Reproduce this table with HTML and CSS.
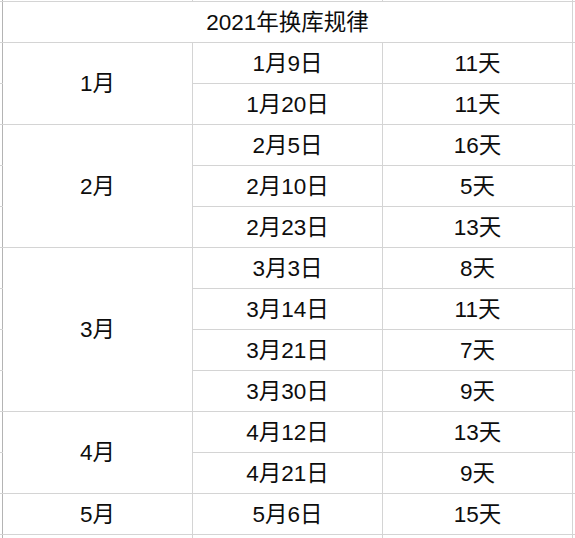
FILE: index.html
```html
<!DOCTYPE html>
<html lang="zh-CN">
<head>
<meta charset="utf-8">
<title>2021年换库规律</title>
<link rel="stylesheet" href="styles.css">
</head>
<body>
<div class="sheet">
  <div class="stub edge-l"></div><div class="stub"></div><div class="stub"></div><div class="stub"></div><div class="stub"></div>

  <div class="stub edge-l"></div>
  <div class="cell title">2021年换库规律</div>
  <div class="stub"></div>

  <div class="stub edge-l"></div><div class="cell month span2">1月</div><div class="cell">1月9日</div><div class="cell">11天</div><div class="stub"></div>
  <div class="stub edge-l"></div><div class="cell">1月20日</div><div class="cell">11天</div><div class="stub"></div>

  <div class="stub edge-l"></div><div class="cell month span3">2月</div><div class="cell">2月5日</div><div class="cell">16天</div><div class="stub"></div>
  <div class="stub edge-l"></div><div class="cell">2月10日</div><div class="cell">5天</div><div class="stub"></div>
  <div class="stub edge-l"></div><div class="cell">2月23日</div><div class="cell">13天</div><div class="stub"></div>

  <div class="stub edge-l"></div><div class="cell month span4">3月</div><div class="cell">3月3日</div><div class="cell">8天</div><div class="stub"></div>
  <div class="stub edge-l"></div><div class="cell">3月14日</div><div class="cell">11天</div><div class="stub"></div>
  <div class="stub edge-l"></div><div class="cell">3月21日</div><div class="cell">7天</div><div class="stub"></div>
  <div class="stub edge-l"></div><div class="cell">3月30日</div><div class="cell">9天</div><div class="stub"></div>

  <div class="stub edge-l"></div><div class="cell month span2">4月</div><div class="cell">4月12日</div><div class="cell">13天</div><div class="stub"></div>
  <div class="stub edge-l"></div><div class="cell">4月21日</div><div class="cell">9天</div><div class="stub"></div>

  <div class="stub edge-l"></div><div class="cell month">5月</div><div class="cell">5月6日</div><div class="cell">15天</div><div class="stub"></div>

  <div class="stub edge-l"></div><div class="stub"></div><div class="stub"></div><div class="stub"></div><div class="stub"></div>
</div>
</body>
</html>
```
FILE: styles.css
```css
html, body {
  margin: 0;
  padding: 0;
  background: #ffffff;
}

.sheet {
  width: 575px;
  height: 538px;
  overflow: hidden;
  display: grid;
  grid-template-columns: 2px 189px 189px 189px 2px;
  grid-template-rows: 1px 40px repeat(12, 40px) 3px;
  gap: 1px;
  background: #d4d4d4;
  font-family: "Liberation Sans", "Noto Sans CJK SC", sans-serif;
  font-size: 22.5px;
  color: #0d0d0d;
}

.stub {
  background: #ffffff;
}

.edge-l {
  box-shadow: 1px 0 0 #b4b4b4;
}

.cell {
  background: #ffffff;
  display: flex;
  align-items: center;
  justify-content: center;
  line-height: 1;
  padding-top: 2px;
}

.title {
  grid-column: span 3;
}

.span2 { grid-row: span 2; }
.span3 { grid-row: span 3; }
.span4 { grid-row: span 4; }
```
